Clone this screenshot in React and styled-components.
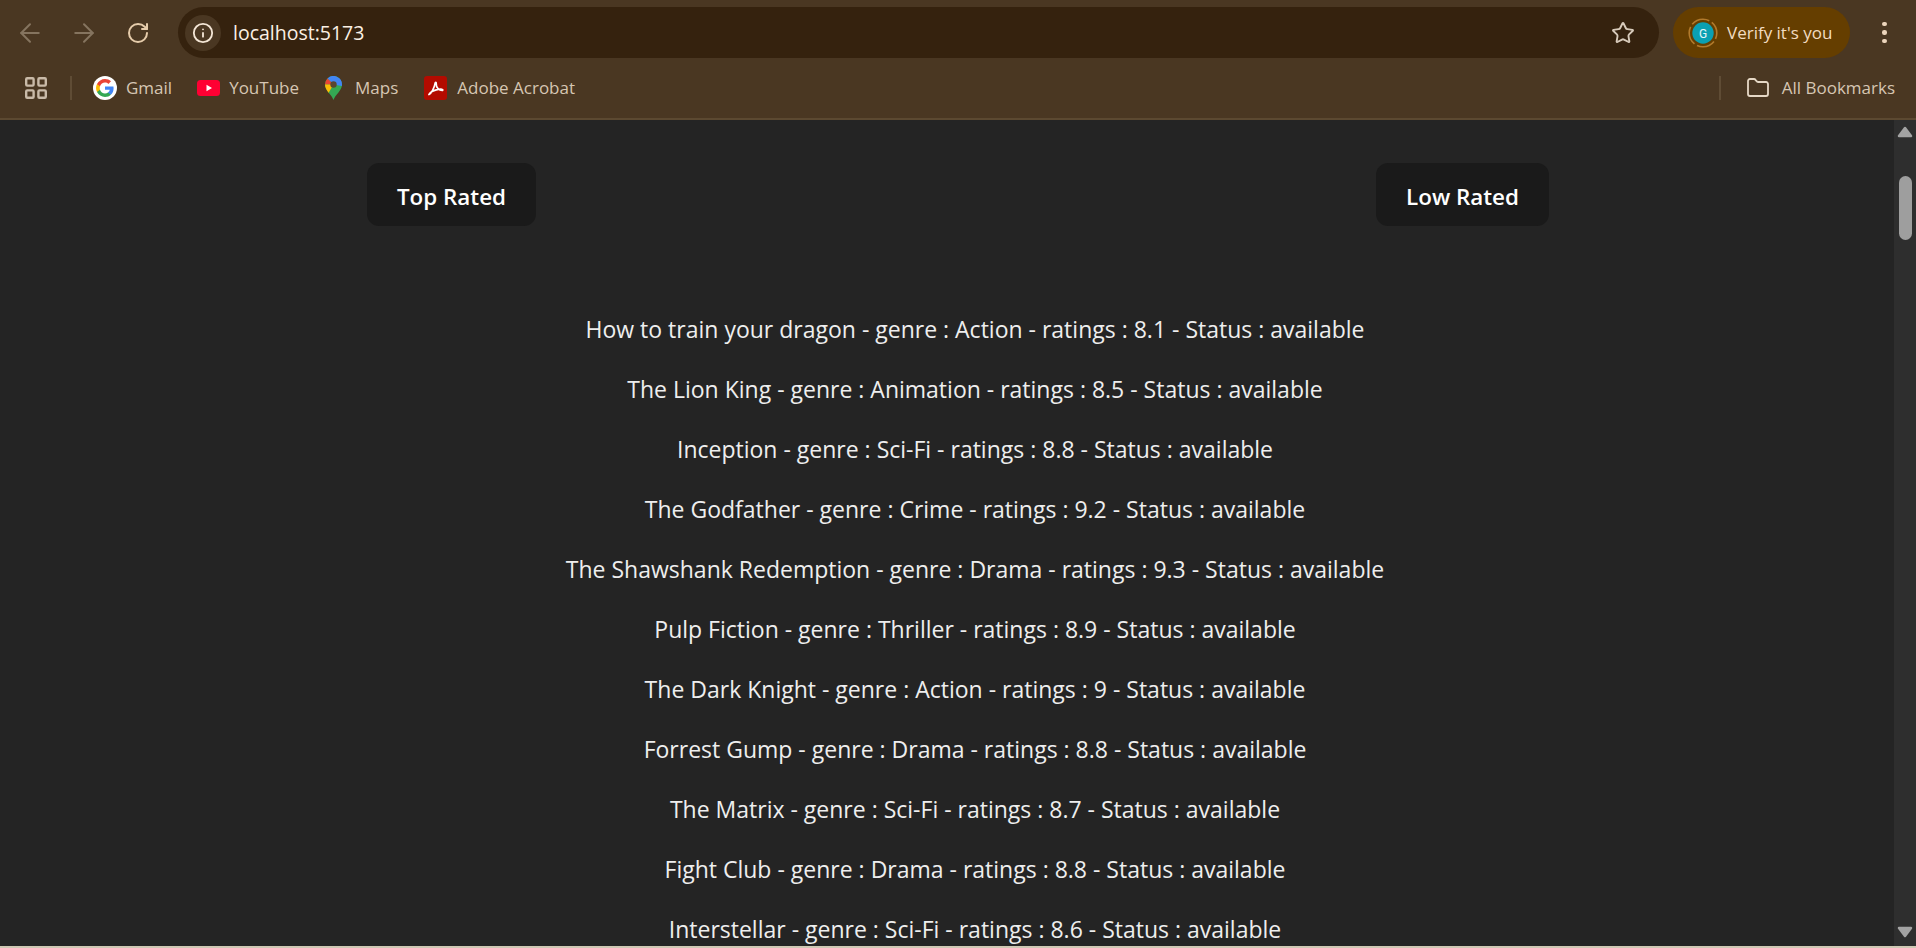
import React from 'react';
import styled, { createGlobalStyle } from 'styled-components';
import { ArrowLeft, ArrowRight, RotateCw, Info, Star, Folder } from 'lucide-react';

const Global = createGlobalStyle`
  html, body { margin: 0; padding: 0; height: 100%; overflow: hidden; background: #242424; }
  #root { height: 100%; }
  * { box-sizing: border-box; }
`;

const Window = styled.div`
  height: 948px; display: flex; flex-direction: column; overflow: hidden;
  font-family: "Open Sans", "Noto Sans", sans-serif; background: #242424;
`;
const Toolbar = styled.div`
  height: 65px; flex: none; background: #4a3722; display: flex; align-items: center;
  padding: 0 0 0 13px;
`;
const NavButton = styled.div`
  width: 34px; height: 34px; margin-right: ${p => p.$gap}px; display: flex; align-items: center; justify-content: center;
  color: ${p => p.$dim ? '#85745f' : '#e6ccab'}; flex: none;
`;
const AddressBar = styled.div`
  width: 1481px; height: 51px; margin-left: 23px; flex: none; border-radius: 26px; background: #35220e;
  display: flex; align-items: center; padding: 0 24px 0 7px;
`;
const InfoChip = styled.div`
  width: 36px; height: 36px; border-radius: 50%; background: #4a3722; color: #f4e6d6; flex: none;
  display: flex; align-items: center; justify-content: center;
`;
const Url = styled.div`
  flex: 1; margin-left: 12px; color: #fbf0e4; font-size: 19.5px;
`;
const StarButton = styled.div` color: #d8cbbb; display: flex; `;
const VerifyPill = styled.div`
  width: 177px; height: 51px; margin-left: 14px; flex: none; border-radius: 26px; background: #653e00;
  display: flex; align-items: center; padding-left: 15px; gap: 9px; color: #f2dcc0; font-size: 17px;
`;
const MenuDots = styled.div`
  margin-left: 32px; flex: none; width: 5px; display: flex; flex-direction: column; gap: 4px;
  & i { display: block; width: 4.5px; height: 4.5px; border-radius: 50%; background: #edd5bc; }
`;
const BookmarkBar = styled.div`
  height: 55px; flex: none; background: #4a3722; border-bottom: 2px solid #5c4931;
  display: flex; align-items: center; padding: 0 21px 7px 25px; color: #d6c6b3; font-size: 17px;
`;
const Separator = styled.div`
  width: 2px; height: 24px; background: #5f4c35; margin: ${p => p.$m}; flex: none;
`;
const Bookmark = styled.div`
  display: flex; align-items: center; gap: ${p => p.$gap}px; margin-right: ${p => p.$mr}px; white-space: nowrap;
`;
const Label = styled.span`
  position: relative; top: -1px;
`;
const Spacer = styled.div` flex: 1; `;
const Viewport = styled.div` flex: 1; min-height: 0; display: flex; `;
const Main = styled.main` flex: 1; min-width: 0; overflow: hidden; color: #f0f0f0; `;
const ButtonRow = styled.div`
  display: flex; justify-content: space-between; padding: 43px 345px 0 367px;
`;
const Button = styled.button`
  height: 63px; width: ${p => p.$w}px; border: 0; border-radius: 12px; background: #1a1a1a; color: #fff;
  font: 600 22.4px "Open Sans", "Noto Sans", sans-serif; padding: 4px 0 0;
`;
const MovieList = styled.ul`
  list-style: none; margin: 0; padding: 73px 0 0 56px; text-align: center;
`;
const MovieRow = styled.li`
  height: 60px; line-height: 60px; font-size: 23px; color: #eeeeee; white-space: nowrap;
`;
const Scrollbar = styled.div`
  width: 22px; flex: none; background: #2e2e2e; display: flex; flex-direction: column; align-items: center; padding: 6px 0 0 0;
`;
const ArrowSlot = styled.svg`
  flex: none; display: block; ${p => p.$down ? 'margin-top: auto; margin-bottom: 8px;' : ''}
`;
const Thumb = styled.div`
  width: 13px; height: 64px; border-radius: 7px; background: #9e9e9e; margin-top: 38px;
`;
const BottomEdge = styled.div` height: 2px; flex: none; background: #cfc8b4; `;

const GoogleIcon = () => (
  <svg width="24" height="24" viewBox="0 0 24 24" style={{ flex: 'none' }}>
    <circle cx="12" cy="12" r="12" fill="#fff" />
    <path fill="#4285F4" d="M20.6 12.2c0-.6-.1-1.2-.2-1.8H12v3.4h4.8c-.2 1.1-.8 2-1.8 2.7v2.2h2.9c1.7-1.6 2.7-3.8 2.7-6.5z" />
    <path fill="#34A853" d="M12 21c2.4 0 4.4-.8 5.9-2.2L15 16.6c-.8.5-1.8.9-3 .9-2.3 0-4.3-1.6-5-3.7H4v2.3C5.5 19 8.5 21 12 21z" />
    <path fill="#FBBC05" d="M7 13.8c-.4-1.1-.4-2.4 0-3.5V8H4c-1.3 2.5-1.3 5.5 0 8.1l3-2.3z" />
    <path fill="#EA4335" d="M12 6.6c1.3 0 2.5.5 3.4 1.3l2.6-2.6C16.400 3.800 14.300 3 12 3 8.500 3 5.500 5 4 8l3 2.300C7.700 8.200 9.700 6.600 12 6.600z" />
  </svg>
);
const YouTubeIcon = () => (
  <svg width="23" height="16" viewBox="0 0 23 16" style={{ flex: 'none' }}>
    <rect width="23" height="16" rx="3.500" fill="#FF0033" />
    <path d="M9.500 4.800l5.500 3.200-5.500 3.200z" fill="#fff" />
  </svg>
);
const MapsIcon = () => (
  <svg width="17" height="24" viewBox="0 0 17 24" style={{ flex: 'none' }}>
    <path d="M8.500 24C7 19 0 14.500 0 8.500a8.500 8.500 0 0 1 17 0C17 14.500 10 19 8.500 24z" fill="#34A853" />
    <path d="M2.500 2.500A8.500 8.500 0 0 1 17 8.500c0 .5 0 1-.2 1.500L8.500 8.500z" fill="#4285F4" />
    <path d="M2.500 2.500A8.500 8.500 0 0 0 0 8.500L8.500 8.500z" fill="#EA4335" />
    <path d="M0 8.500c0 3 1.600 5.600 3.600 8.200L8.500 8.500z" fill="#FBBC05" />
    <circle cx="8.500" cy="8.500" r="3.200" fill="#5a4630" />
  </svg>
);
const AcrobatIcon = () => (
  <svg width="23" height="24" viewBox="0 0 23 24" style={{ flex: 'none' }}>
    <rect width="23" height="24" rx="3" fill="#B30B00" />
    <path d="M5 18.500c2.400-1.200 5.500-7 6-11 .2-1.500 1.300-1.500 1.200 0-.3 4 3 7 6 7 .8 0 .8-1.100-.2-1.200-3-.4-8.500.8-11 2.800-1 .9-2.500 2.900-2 2.400z" fill="none" stroke="#fff" strokeWidth="1.700" strokeLinejoin="round" />
  </svg>
);
const AppsIcon = () => (
  <svg width="22" height="22" viewBox="0 0 22 22" fill="none" stroke="#c9baa8" strokeWidth="2.400" style={{ flex: 'none' }}>
    <rect x="1.200" y="1.200" width="7.400" height="7.400" rx="1" />
    <rect x="13.400" y="1.200" width="7.400" height="7.400" rx="1" />
    <rect x="1.200" y="13.400" width="7.400" height="7.400" rx="1" />
    <rect x="13.400" y="13.400" width="7.400" height="7.400" rx="1" />
  </svg>
);
const AvatarIcon = () => (
  <svg width="30" height="30" viewBox="0 0 30 30" style={{ flex: 'none' }}>
    <circle cx="15" cy="15" r="13.800" fill="none" stroke="#b27a2c" strokeWidth="1.600" strokeDasharray="18.700 3" strokeDashoffset="-9" />
    <circle cx="15" cy="15" r="10.700" fill="#0aa0b3" />
    <text x="15" y="19.500" textAnchor="middle" fontSize="12" fill="#e8f6f8" fontFamily="Roboto, sans-serif">G</text>
  </svg>
);

const movies = [
  ['How to train your dragon', 'Action', '8.1'],
  ['The Lion King', 'Animation', '8.5'],
  ['Inception', 'Sci-Fi', '8.8'],
  ['The Godfather', 'Crime', '9.2'],
  ['The Shawshank Redemption', 'Drama', '9.3'],
  ['Pulp Fiction', 'Thriller', '8.9'],
  ['The Dark Knight', 'Action', '9'],
  ['Forrest Gump', 'Drama', '8.8'],
  ['The Matrix', 'Sci-Fi', '8.7'],
  ['Fight Club', 'Drama', '8.8'],
  ['Interstellar', 'Sci-Fi', '8.6'],
];

export default function App() {
  return (
    <Window>
      <Global />
      <Toolbar>
        <NavButton $dim $gap={20}><ArrowLeft size={30} strokeWidth={1.6} /></NavButton>
        <NavButton $dim $gap={20}><ArrowRight size={30} strokeWidth={1.6} /></NavButton>
        <NavButton $gap={0}><RotateCw size={24} strokeWidth={2} /></NavButton>
        <AddressBar>
          <InfoChip><Info size={22} strokeWidth={2} /></InfoChip>
          <Url>localhost:5173</Url>
          <StarButton><Star size={24} strokeWidth={1.9} /></StarButton>
        </AddressBar>
        <VerifyPill><AvatarIcon />Verify it's you</VerifyPill>
        <MenuDots><i /><i /><i /></MenuDots>
      </Toolbar>
      <BookmarkBar>
        <AppsIcon />
        <Separator $m="0 21px 0 23px" />
        <Bookmark $gap={9} $mr={25}><GoogleIcon /><Label>Gmail</Label></Bookmark>
        <Bookmark $gap={9} $mr={26}><YouTubeIcon /><Label>YouTube</Label></Bookmark>
        <Bookmark $gap={13} $mr={26}><MapsIcon /><Label>Maps</Label></Bookmark>
        <Bookmark $gap={10} $mr={0}><AcrobatIcon /><Label>Adobe Acrobat</Label></Bookmark>
        <Spacer />
        <Separator $m="0 25px 0 0" />
        <Bookmark $gap={12} $mr={0}><Folder size={24} strokeWidth={1.8} color="#e6d8c6" /><Label>All Bookmarks</Label></Bookmark>
      </BookmarkBar>
      <Viewport>
        <Main>
          <ButtonRow>
            <Button $w={169}>Top Rated</Button>
            <Button $w={173}>Low Rated</Button>
          </ButtonRow>
          <MovieList>
            {movies.map(([title, genre, rating]) => (
              <MovieRow key={title}>{title} - genre : {genre} - ratings : {rating} - Status : available</MovieRow>
            ))}
          </MovieList>
        </Main>
        <Scrollbar>
          <ArrowSlot width="16" height="12" viewBox="0 0 16 12">
            <path d="M8 2L14 10H2z" fill="#a3a3a3" stroke="#a3a3a3" strokeWidth="2.500" strokeLinejoin="round" />
          </ArrowSlot>
          <Thumb />
          <ArrowSlot $down width="16" height="12" viewBox="0 0 16 12">
            <path d="M8 10L14 2H2z" fill="#a3a3a3" stroke="#a3a3a3" strokeWidth="2.500" strokeLinejoin="round" />
          </ArrowSlot>
        </Scrollbar>
      </Viewport>
      <BottomEdge />
    </Window>
  );
}
